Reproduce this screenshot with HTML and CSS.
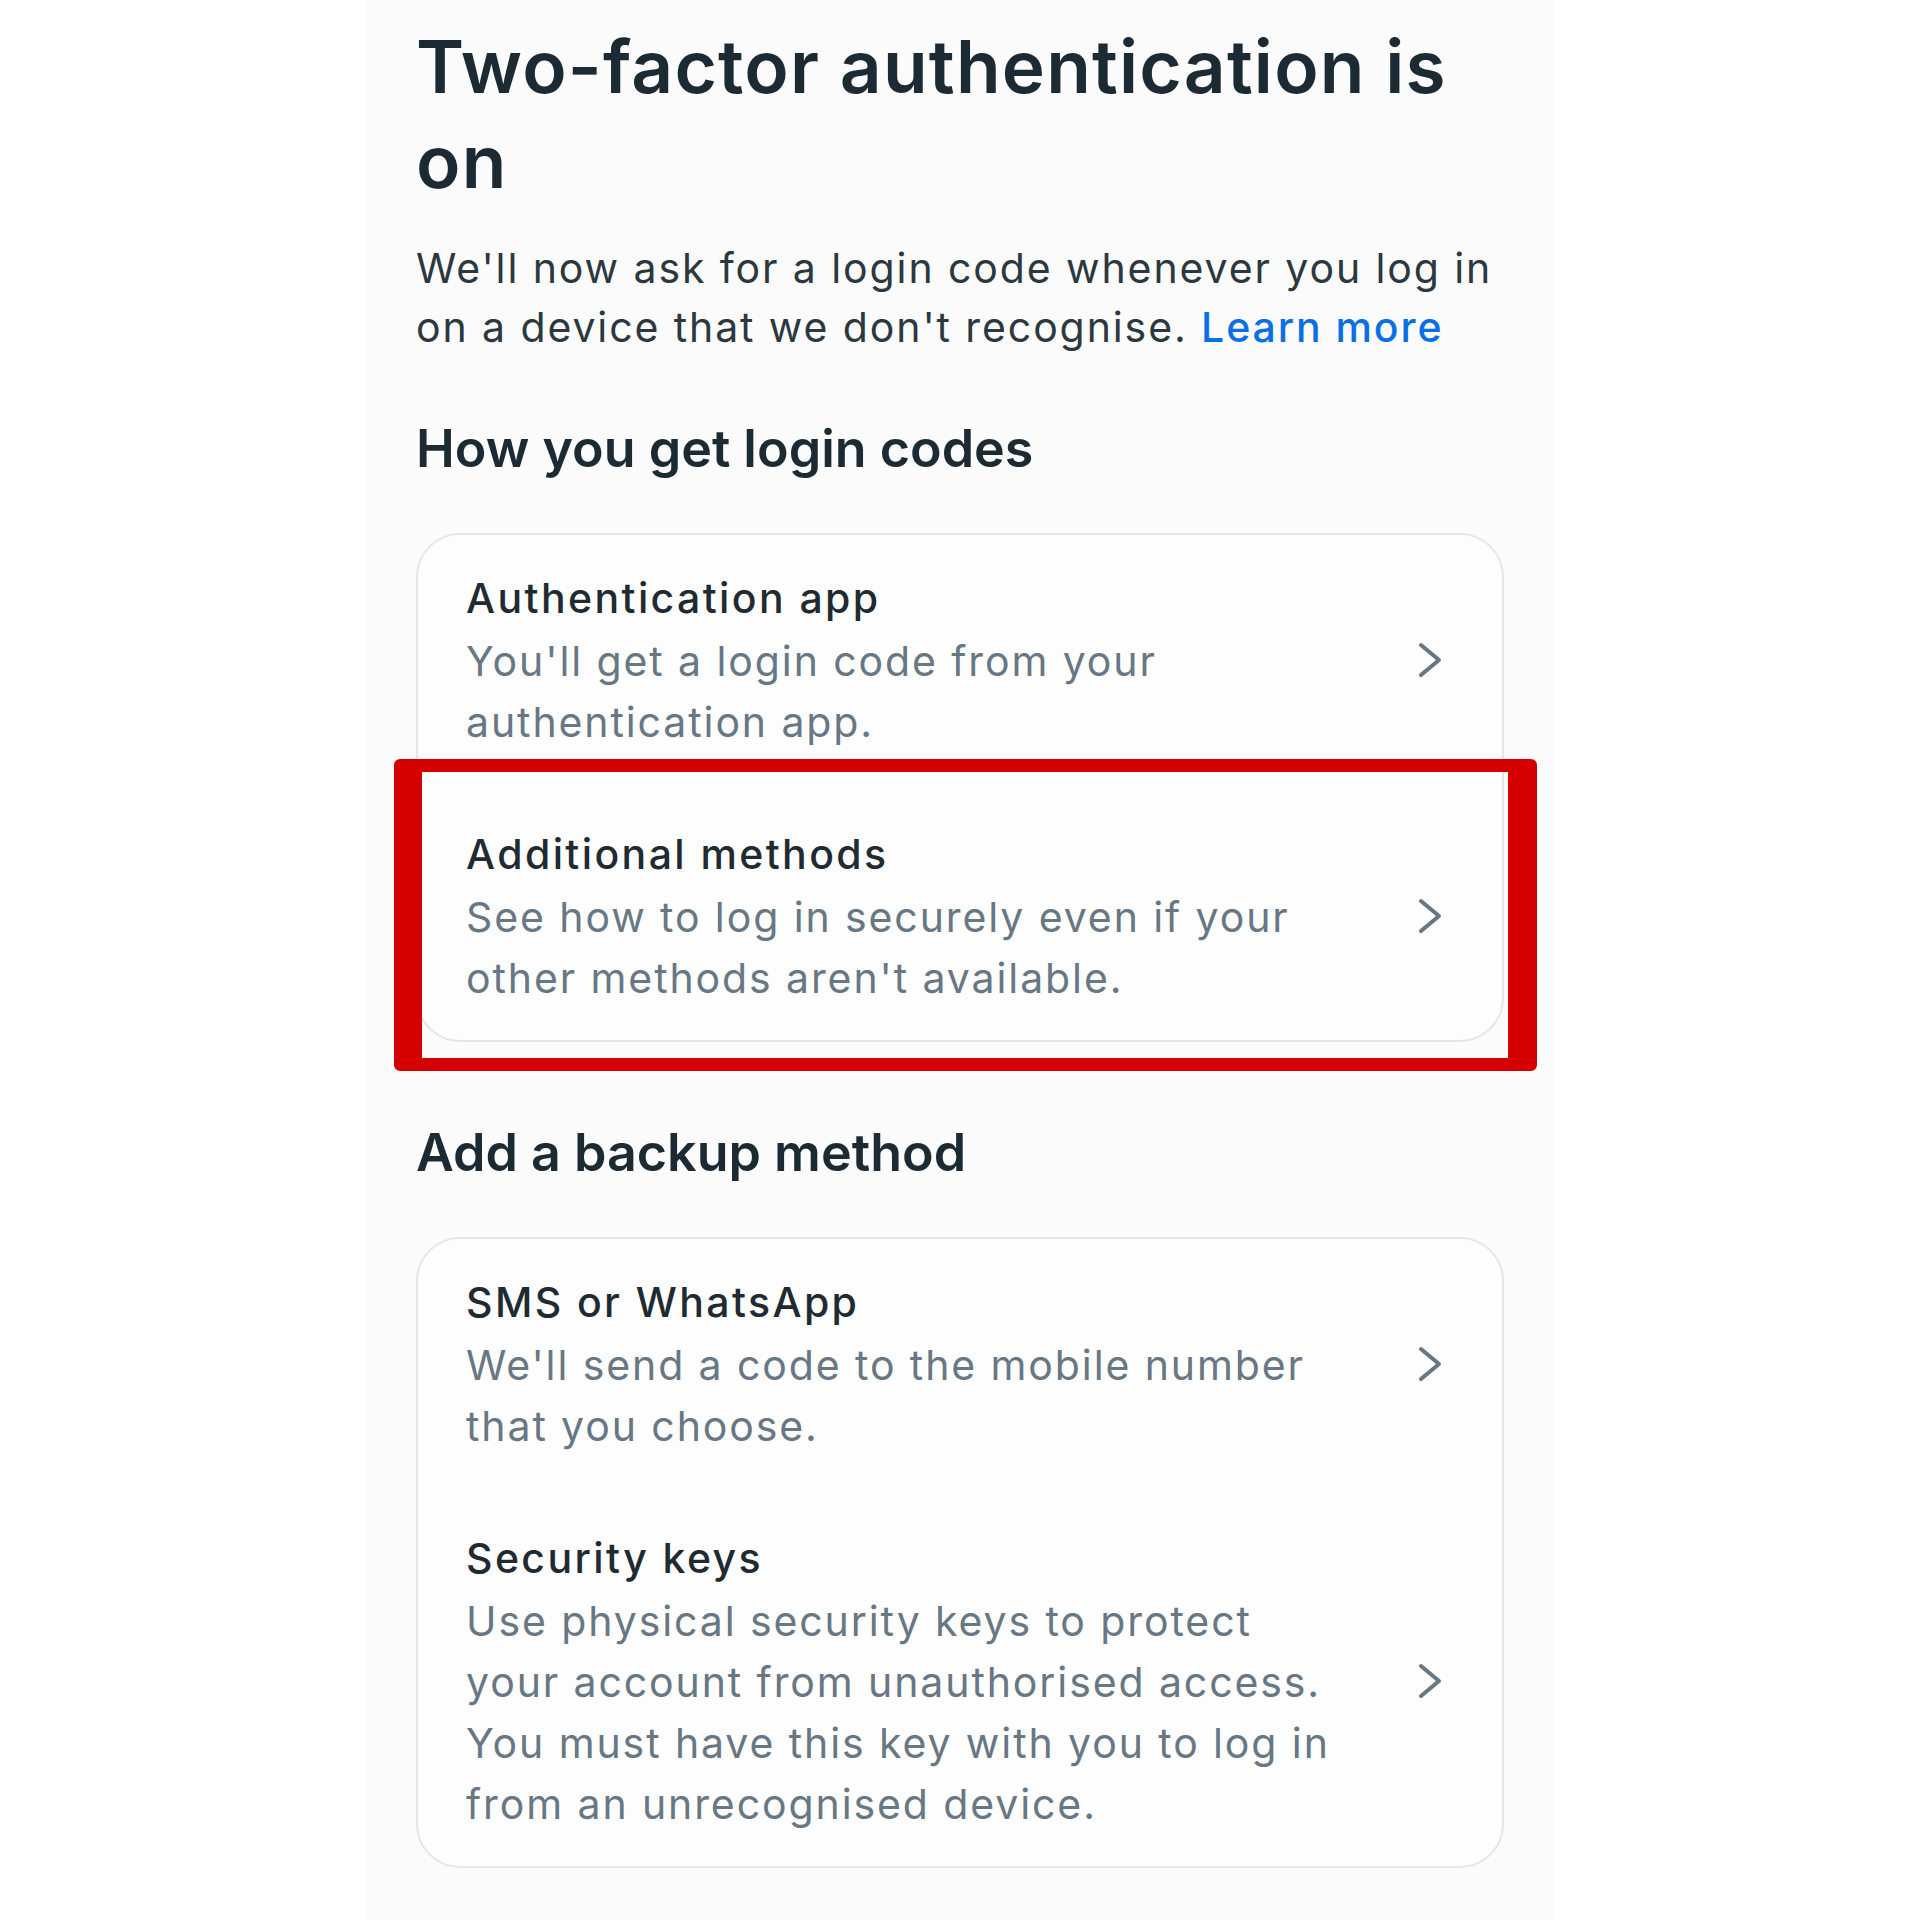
FILE: index.html
```html
<!DOCTYPE html>
<html lang="en">
<head>
    <meta charset="UTF-8">
    <meta name="viewport" content="width=device-width, initial-scale=1.0">
    <title>Two-factor authentication</title>
    <link rel="stylesheet" href="styles.css">
</head>
<body>
    <main class="panel">
        <h1>Two-factor authentication is on</h1>
        <p class="intro">We'll now ask for a login code whenever you log in on a device that we don't recognise. <a href="#">Learn more</a></p>

        <section class="group">
            <h2>How you get login codes</h2>
            <div class="card">
                <a class="row" href="#">
                    <div class="row-text">
                        <div class="row-title">Authentication app</div>
                        <div class="row-sub">You'll get a login code from your authentication app.</div>
                    </div>
                    <svg class="chevron" viewBox="0 0 24 36"><path d="M3 3 L21 18 L3 33"/></svg>
                </a>
                <a class="row" href="#">
                    <div class="row-text">
                        <div class="row-title">Additional methods</div>
                        <div class="row-sub">See how to log in securely even if your other methods aren't available.</div>
                    </div>
                    <svg class="chevron" viewBox="0 0 24 36"><path d="M3 3 L21 18 L3 33"/></svg>
                    <span class="highlight"></span>
                </a>
            </div>
        </section>

        <section class="group">
            <h2>Add a backup method</h2>
            <div class="card">
                <a class="row" href="#">
                    <div class="row-text">
                        <div class="row-title">SMS or WhatsApp</div>
                        <div class="row-sub">We'll send a code to the mobile number that you choose.</div>
                    </div>
                    <svg class="chevron" viewBox="0 0 24 36"><path d="M3 3 L21 18 L3 33"/></svg>
                </a>
                <a class="row" href="#">
                    <div class="row-text">
                        <div class="row-title">Security keys</div>
                        <div class="row-sub">Use physical security keys to protect your account from unauthorised access. You must have this key with you to log in from an unrecognised device.</div>
                    </div>
                    <svg class="chevron" viewBox="0 0 24 36"><path d="M3 3 L21 18 L3 33"/></svg>
                </a>
            </div>
        </section>
    </main>
</body>
</html>
```

FILE: styles.css
```css
body {
    margin: 0;
    background-color: #fff;
    font-family: Inter, "Noto Sans", sans-serif;
    color: #1c2b33;
}
.panel {
    width: 1188px;
    min-height: 1920px;
    margin: 0 auto;
    padding: 19px 50px 0;
    box-sizing: border-box;
    background-color: #fbfbfb;
}
h1 {
    margin: 0;
    font-size: 73px;
    line-height: 95px;
    font-weight: 600;
    letter-spacing: 1.2px;
    color: #1c2b33;
}
.intro {
    margin: 30px 0 0;
    font-size: 41px;
    line-height: 59px;
    letter-spacing: 1.9px;
    color: #2c3840;
}
.intro a {
    color: #0a6fe5;
    font-weight: 500;
    text-decoration: none;
}
.group {
    margin-top: 60px;
}
.group + .group {
    margin-top: 79px;
}
h2 {
    margin: 0 0 52px;
    font-size: 52px;
    line-height: 64px;
    font-weight: 600;
    color: #1c2b33;
}
.card {
    border: 2px solid #e4e6e9;
    border-radius: 44px;
    background-color: #fdfdfd;
    display: flex;
    flex-direction: column;
    gap: 7px;
}
.row {
    position: relative;
    display: flex;
    align-items: center;
    padding: 31px 60px 31px 48px;
    text-decoration: none;
    color: inherit;
}
.row-text {
    flex: 1;
    margin-right: 68px;
}
.row-title {
    font-size: 41px;
    line-height: 65px;
    font-weight: 500;
    letter-spacing: 2.4px;
    color: #1f2a31;
}
.row-sub {
    font-size: 41px;
    line-height: 61px;
    letter-spacing: 1.9px;
    color: #687784;
}
.chevron {
    width: 24px;
    height: 36px;
    flex-shrink: 0;
}
.chevron path {
    fill: none;
    stroke: #687784;
    stroke-width: 4;
    stroke-linecap: round;
    stroke-linejoin: round;
}
.highlight {
    position: absolute;
    top: -32px;
    bottom: -31px;
    left: -24px;
    right: -35px;
    border-style: solid;
    border-color: #d40000;
    border-width: 13px 29px 13px 28px;
    border-radius: 6px;
    pointer-events: none;
}
```
